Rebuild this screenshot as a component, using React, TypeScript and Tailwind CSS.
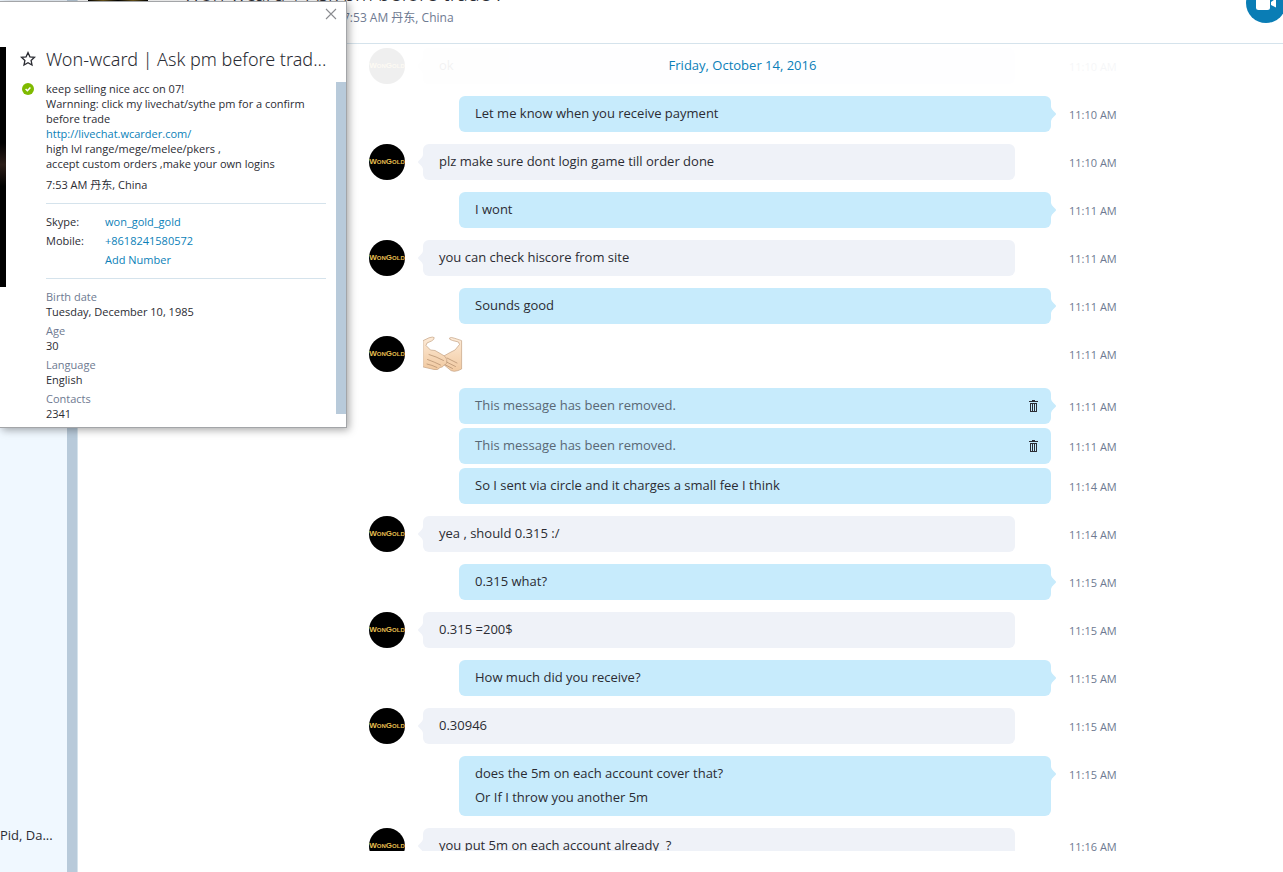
import React from 'react';

type Message = {
   id: number;
   from: 'me' | 'them';
   lines?: string[];
   time: string;
   hands?: boolean;
   removed?: boolean;
   grouped?: boolean;
   tail?: boolean;
   faded?: boolean;
};

const messages: Message[] = [
   { id: 1, from: 'them', lines: ['ok'], time: '11:10 AM', faded: true, tail: true },
   { id: 2, from: 'me', lines: ['Let me know when you receive payment'], time: '11:10 AM', tail: true },
   { id: 3, from: 'them', lines: ['plz make sure dont login game till order done'], time: '11:10 AM', tail: true },
   { id: 4, from: 'me', lines: ['I wont'], time: '11:11 AM', tail: true },
   { id: 5, from: 'them', lines: ['you can check hiscore from site'], time: '11:11 AM', tail: true },
   { id: 6, from: 'me', lines: ['Sounds good'], time: '11:11 AM', tail: true },
   { id: 7, from: 'them', hands: true, time: '11:11 AM' },
   { id: 8, from: 'me', lines: ['This message has been removed.'], time: '11:11 AM', removed: true, tail: true },
   { id: 9, from: 'me', lines: ['This message has been removed.'], time: '11:11 AM', removed: true, grouped: true },
   { id: 10, from: 'me', lines: ['So I sent via circle and it charges a small fee I think'], time: '11:14 AM', grouped: true },
   { id: 11, from: 'them', lines: ['yea , should 0.315 :/'], time: '11:14 AM', tail: true },
   { id: 12, from: 'me', lines: ['0.315 what?'], time: '11:15 AM', tail: true },
   { id: 13, from: 'them', lines: ['0.315 =200$'], time: '11:15 AM', tail: true },
   { id: 14, from: 'me', lines: ['How much did you receive?'], time: '11:15 AM', tail: true },
   { id: 15, from: 'them', lines: ['0.30946'], time: '11:15 AM', tail: true },
   { id: 16, from: 'me', lines: ['does the 5m on each account cover that?', 'Or If I throw you another 5m'], time: '11:15 AM', tail: true },
   { id: 17, from: 'them', lines: ['you put 5m on each account already  ?'], time: '11:16 AM', tail: true },
];

const details = [
   { label: 'Birth date', value: 'Tuesday, December 10, 1985' },
   { label: 'Age', value: '30' },
   { label: 'Language', value: 'English' },
   { label: 'Contacts', value: '2341' },
];

const Avatar = () => (
   <div className="flex size-9 shrink-0 items-center justify-center rounded-full bg-black">
      <span className="font-['Liberation_Sans',sans-serif] text-[6px] leading-none font-bold whitespace-nowrap text-[#e3bd4e]">
         <span className="text-[8px]">W</span>ON<span className="text-[8px]">G</span>OLD
      </span>
   </div>
);

const TrashIcon = () => (
   <svg viewBox="0 0 9 12" className="h-3 w-[9px]" fill="#2b2c33" shapeRendering="crispEdges">
      <path d="M3 0h3v1h3v1H0V1h3z" />
      <path fillRule="evenodd" d="M1 3h7v9H1zM2 4v7h1V4zM4 4v7h1V4zM6 4v7h1V4z" />
   </svg>
);

const HandsEmoticon = () => (
   <svg viewBox="0 0 40 36" className="h-9 w-10" role="img" aria-label="handshake" strokeLinecap="round" strokeLinejoin="round">
      <defs>
         <linearGradient id="skin" x1="0" y1="0" x2="0" y2="1">
            <stop offset="0" stopColor="#fdebd8" />
            <stop offset="1" stopColor="#f1c9a0" />
         </linearGradient>
      </defs>
      <path
         d="M38.600 5V33L35 34.600q-4 1.500-7 0L20 28l-1-7 9-5 4-2 4.500-5.500-1-2.500-6-1.500Q25.800 3.500 26.500 2q1-1.200 5 .2z"
         fill="url(#skin)"
         stroke="#c4a283"
         strokeWidth=".7"
      />
      <path
         d="M.4 4.500 6 1.800Q10 .4 11.200 1.600 11.500 3.500 8.500 5L4 7l-1 2.500L7.500 14l4.500.5 9.500 5.500q3 3 2.500 6.500-.5 2-3 2.500-1 2.500-4 2.500-2 3-6 2L.4 31z"
         fill="url(#skin)"
         stroke="#c4a283"
         strokeWidth=".7"
      />
      <path
         d="M6 18.500q7 2 14.500 6M4.500 23.500q7 2.500 13 5.500M4 28q5 1 10 3.500M24 22l10 5M23.500 26l9 4.500M22.500 29l7 3.500"
         fill="none"
         stroke="#b99474"
         strokeWidth=".8"
      />
   </svg>
);

const Tail = ({ from }: { from: Message['from'] }) =>
   from === 'me' ? (
      <svg viewBox="0 0 5 14" className="absolute top-[11px] -right-[5px] h-3.5 w-[5px]" fill="#c7ebfc">
         <path d="M0 0q.5 2.500 2.500 4L4.500 6q1 1 0 2L2.500 10Q.5 11.500 0 14z" />
      </svg>
   ) : (
      <svg viewBox="0 0 5 14" className="absolute top-[11px] -left-[5px] h-3.5 w-[5px]" fill="#eff2f8">
         <path d="M5 0Q4.500 2.500 2.500 4L.5 6q-1 1 0 2l2 2q2 1.500 2.500 4z" />
      </svg>
   );

const MessageRow = ({ message }: { message: Message }) => {
   const mine = message.from === 'me';

   return (
      <li className={`flex ${message.grouped ? 'mt-1' : 'mt-3'} first:mt-0 ${message.faded ? 'opacity-[0.06]' : ''}`}>
         <div className="w-9 shrink-0">{!mine && <Avatar />}</div>
         <div className="ml-[18px] min-w-0 flex-1">
            {message.hands ? (
               <div className="h-10">
                  <HandsEmoticon />
               </div>
            ) : (
               <div
                  className={`relative flex items-start justify-between rounded-md px-4 pt-[5px] pb-[7px] ${mine ? 'ml-9 bg-[#c7ebfc]' : 'mr-9 bg-[#eff2f8]'}`}
               >
                  <div className={`whitespace-pre-wrap ${message.removed ? 'text-[#596875]' : 'text-[#2b2c33]'}`}>
                     {message.lines?.map((line) => <p key={line}>{line}</p>)}
                  </div>
                  {message.removed && (
                     <button type="button" aria-label="Removed message" className="-mr-[3px] flex h-6 items-center pt-0.5">
                        <TrashIcon />
                     </button>
                  )}
                  {message.tail && <Tail from={message.from} />}
               </div>
            )}
         </div>
         <time className="mt-[7px] ml-[18px] w-16 shrink-0 text-[11px] text-[#6e7a91]">{message.time}</time>
      </li>
   );
};

const ProfileCard = () => (
   <aside className="absolute top-px left-0 w-[347px] border border-l-0 border-[#a3a5a8] bg-white pb-[13px] text-[11px] leading-[15px] text-[#2b2c33] shadow-[2px_2px_8px_rgba(0,0,0,0.35)]">
      <div className="flex h-[45px] items-start justify-end pt-1.5 pr-[9px]">
         <button type="button" aria-label="Close">
            <svg viewBox="0 0 12 12" className="size-3" stroke="#8a8c90" strokeWidth="1.100">
               <path d="M1 1l10 10M11 1L1 11" />
            </svg>
         </button>
      </div>
      <div className="flex">
         <div className="h-60 w-1.5 shrink-0 bg-[linear-gradient(#000_40%,#2b1d18_49%,#000_58%)]" />
         <div className="min-w-0 flex-1">
            <div className="flex items-center pl-[14px]">
               <button type="button" aria-label="Add to favorites">
                  <svg viewBox="0 0 16 16" className="size-4" fill="none" stroke="#2b2c33" strokeWidth="1.300" strokeLinejoin="miter">
                     <path d="M8 1.600l1.900 4.200 4.600.5-3.400 3.100.9 4.600L8 11.700 4 14l.9-4.600L1.500 6.300l4.600-.5z" />
                  </svg>
               </button>
               <h2 className="ml-2.5 font-['Noto_Sans',sans-serif] text-[18px] leading-6 font-light whitespace-nowrap">
                  Won-wcard | Ask pm before trad...
               </h2>
            </div>
            <div className="mt-[11px] flex h-[332px]">
               <div className="w-10 shrink-0 pl-4">
                  <svg viewBox="0 0 12 12" className="mt-px size-3">
                     <circle cx="6" cy="6" r="6" fill="#7fba00" />
                     <path d="M3.600 6l1.800 1.700 3-3.200" fill="none" stroke="#fff" strokeWidth="1.500" />
                  </svg>
               </div>
               <div className="-mt-px min-w-0 flex-1 pr-2.5">
                  <p>keep selling nice acc on 07!</p>
                  <p>
                     Warnning: click my livechat/sythe pm for a confirm
                     <br />
                     before trade
                  </p>
                  <a href="http://livechat.wcarder.com/" className="block text-[#0b7fb8]">
                     http://livechat.wcarder.com/
                  </a>
                  <p>high lvl range/mege/melee/pkers ,</p>
                  <p>accept custom orders ,make your own logins</p>
                  <p className="mt-1.5">7:53 AM 丹东, China</p>
                  <dl className="mt-[11px] grid grid-cols-[59px_1fr] gap-y-1 border-y border-[#d5e3ec] pt-2.5 pb-[11px]">
                     <dt>Skype:</dt>
                     <dd>
                        <a href="#skype" className="text-[#0b7fb8]">won_gold_gold</a>
                     </dd>
                     <dt>Mobile:</dt>
                     <dd>
                        <a href="#mobile" className="text-[#0b7fb8]">+8618241580572</a>
                     </dd>
                     <dd className="col-start-2">
                        <button type="button" className="text-[#0b7fb8]">Add Number</button>
                     </dd>
                  </dl>
                  <dl className="mt-2.5 flex flex-col gap-1">
                     {details.map((item) => (
                        <div key={item.label}>
                           <dt className="text-[#6e7a91]">{item.label}</dt>
                           <dd>{item.value}</dd>
                        </div>
                     ))}
                  </dl>
               </div>
               <div className="w-2.5 shrink-0 bg-[#b8cada]" />
            </div>
         </div>
      </div>
   </aside>
);

const App = () => {
   return (
      <div className="relative flex h-screen overflow-hidden bg-white font-['Open_Sans','Noto_Sans_CJK_SC',sans-serif] text-[13px] leading-6 text-[#2b2c33]">
         <nav className="flex w-[78px] shrink-0 border-r border-[#d5e3ec] bg-[#f0f8ff]">
            <div className="flex min-w-0 flex-1 flex-col justify-end pb-[25px]">
               <a href="#chat" className="whitespace-nowrap">Pid, Da...</a>
            </div>
            <div className="w-2.5 bg-[#b8cada]" />
         </nav>

         <main className="flex min-w-0 flex-1 flex-col">
            <header className="flex h-11 shrink-0 items-start justify-between border-b border-[#d5e3ec]">
               <div className="flex">
                  <div className="-mt-[58px] ml-2.5 size-[60px] bg-[linear-gradient(90deg,#000,#6b5518,#000,#6b5518,#000)]" />
                  <div className="-mt-[22px] ml-[35px]">
                     <h1 className="font-['Noto_Sans',sans-serif] text-[20px] leading-8 font-light">Won-wcard | Ask pm before trade !</h1>
                     <p className="pl-[160px] text-[12px] leading-4 text-[#6e7a91]">7:53 AM 丹东, China</p>
                  </div>
               </div>
               <button
                  type="button"
                  aria-label="Video call"
                  className="-mt-[17px] -mr-[3px] flex size-10 items-center justify-center rounded-full bg-[#0a7db5]"
               >
                  <svg viewBox="0 0 20 14" className="mb-px h-3.5 w-5" fill="#fff">
                     <rect width="14" height="14" rx="2.500" />
                     <path d="M15 6l5-3.500v9L15 9z" />
                  </svg>
               </button>
            </header>

            <section className="relative min-h-0 flex-1 overflow-hidden pt-1 pr-[150px] pl-[291px]">
               <ul>
                  {messages.map((message) => (
                     <MessageRow key={message.id} message={message} />
                  ))}
               </ul>
               <p className="absolute inset-x-0 top-[9px] pr-[167px] pl-[291px] text-center text-[#0b7fb8]">Friday, October 14, 2016</p>
            </section>
            <footer className="h-[21px] shrink-0" />
         </main>

         <ProfileCard />
      </div>
   );
};

export default App;
